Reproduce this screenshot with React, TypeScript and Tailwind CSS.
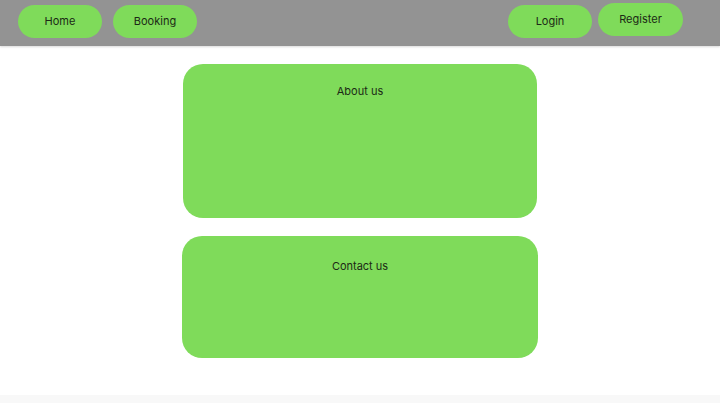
import React from 'react';

const navBtn =
  'w-[84px] h-[33px] rounded-[17px] bg-[#7fdb5a] text-[11px] text-[#1c2a16] flex items-center justify-center';

export default function App() {
  return (
    <div className="w-[720px] h-[403px] bg-white overflow-hidden flex flex-col font-['Inter',sans-serif]">
      {/* Top bar */}
      <header className="h-[46px] shrink-0 bg-[#939393] flex items-start pt-[5px] pl-[18px] pr-[37px] shadow-[0_1px_2px_rgba(0,0,0,0.15)]">
        <div className="flex gap-[11px]">
          <button className={navBtn}>Home</button>
          <button className={navBtn}>Booking</button>
        </div>
        <div className="ml-auto flex gap-[6px] items-start">
          <button className={navBtn}>Login</button>
          <button className={`${navBtn} w-[85px] -mt-[2px]`}>Register</button>
        </div>
      </header>

      {/* Content */}
      <main className="flex flex-col items-center pt-[18px] gap-[18px]">
        <section className="w-[354px] h-[154px] rounded-[20px] bg-[#7fdb5a] flex justify-center pt-[19px]">
          <h2 className="text-[11px] leading-[16px] text-[#1c2a16]">About us</h2>
        </section>
        <section className="w-[356px] h-[122px] rounded-[20px] bg-[#7fdb5a] flex justify-center pt-[22px]">
          <h2 className="text-[11px] leading-[16px] text-[#1c2a16]">Contact us</h2>
        </section>
      </main>

      <div className="mt-auto h-[8px] bg-[#f8f8f8]" />
    </div>
  );
}
